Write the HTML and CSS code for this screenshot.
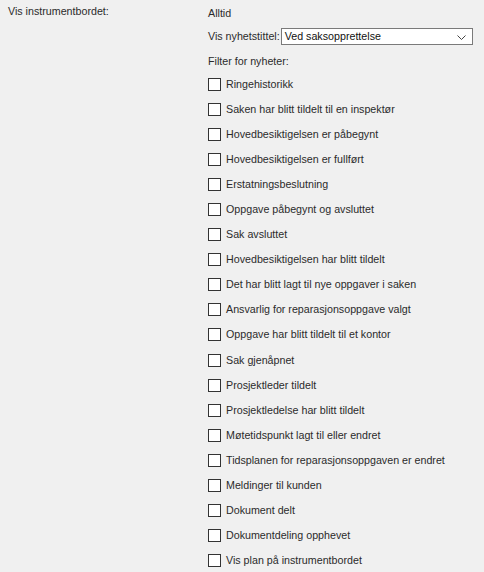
FILE: index.html
```html
<!DOCTYPE html>
<html lang="no">
<head>
<meta charset="utf-8">
<link rel="stylesheet" href="styles.css">
</head>
<body>
<div class="form-row">
  <div class="label">Vis instrumentbordet:</div>
  <div class="field">
    <div class="line value">Alltid</div>
    <div class="line select-line">
      <span>Vis nyhetstittel:</span>
      <div class="select">
        <span>Ved saksopprettelse</span>
        <svg class="chev" width="9" height="6" viewBox="0 0 9 6"><path d="M0.5 0.5 L4.5 4.5 L8.5 0.5" fill="none" stroke="#444" stroke-width="1"/></svg>
      </div>
    </div>
    <div class="line filter-title">Filter for nyheter:</div>
    <ul class="checks">
      <li><span class="box"></span>Ringehistorikk</li>
      <li><span class="box"></span>Saken har blitt tildelt til en inspektør</li>
      <li><span class="box"></span>Hovedbesiktigelsen er påbegynt</li>
      <li><span class="box"></span>Hovedbesiktigelsen er fullført</li>
      <li><span class="box"></span>Erstatningsbeslutning</li>
      <li><span class="box"></span>Oppgave påbegynt og avsluttet</li>
      <li><span class="box"></span>Sak avsluttet</li>
      <li><span class="box"></span>Hovedbesiktigelsen har blitt tildelt</li>
      <li><span class="box"></span>Det har blitt lagt til nye oppgaver i saken</li>
      <li><span class="box"></span>Ansvarlig for reparasjonsoppgave valgt</li>
      <li><span class="box"></span>Oppgave har blitt tildelt til et kontor</li>
      <li><span class="box"></span>Sak gjenåpnet</li>
      <li><span class="box"></span>Prosjektleder tildelt</li>
      <li><span class="box"></span>Prosjektledelse har blitt tildelt</li>
      <li><span class="box"></span>Møtetidspunkt lagt til eller endret</li>
      <li><span class="box"></span>Tidsplanen for reparasjonsoppgaven er endret</li>
      <li><span class="box"></span>Meldinger til kunden</li>
      <li><span class="box"></span>Dokument delt</li>
      <li><span class="box"></span>Dokumentdeling opphevet</li>
      <li><span class="box"></span>Vis plan på instrumentbordet</li>
    </ul>
  </div>
</div>
</body>
</html>
```
FILE: styles.css
```css
html, body {
  margin: 0;
  background: #f0f0f0;
}
body {
  padding: 5px 8px;
  font-family: "Liberation Sans", Arial, sans-serif;
  font-size: 10.7px;
  color: #2b2b2b;
}
.form-row {
  display: grid;
  grid-template-columns: 200px 1fr;
}
.label {
  line-height: 13px;
}
.field {
  display: flex;
  flex-direction: column;
}
.line {
  line-height: 13px;
}
.value {
  padding-top: 2px;
  height: 13px;
}
.select-line {
  margin-top: 8px;
  display: flex;
  align-items: center;
  gap: 1px;
  height: 17px;
}
.select {
  width: 192px;
  height: 17px;
  box-sizing: border-box;
  border: 1px solid #7a7a7a;
  background: #fff;
  color: #111;
  display: flex;
  align-items: center;
  justify-content: space-between;
  padding: 0 6px 0 3px;
}
.chev {
  margin-top: 3px;
}
.filter-title {
  margin-top: 10px;
}
.checks {
  list-style: none;
  margin: 10px 0 0;
  padding: 0;
  display: flex;
  flex-direction: column;
  gap: 12.05px;
}
.checks li {
  display: flex;
  align-items: center;
  gap: 5px;
  height: 13px;
  line-height: 13px;
}
.box {
  width: 13px;
  height: 13px;
  box-sizing: border-box;
  border: 1px solid #333;
  background: #fff;
  flex: none;
}
```
